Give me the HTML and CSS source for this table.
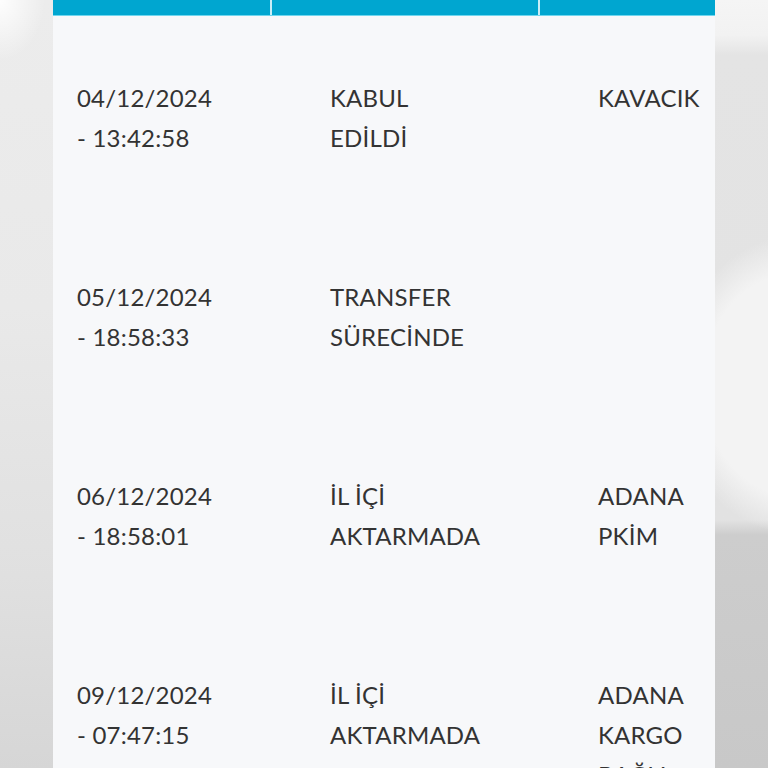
FILE: index.html
```html
<!DOCTYPE html>
<html lang="tr">
<head>
<meta charset="utf-8">
<title>Kargo Takip</title>
<link rel="stylesheet" href="styles.css">
</head>
<body>
<div class="backdrop">
  <div class="panel">
    <div class="thead">
      <div class="th"></div>
      <div class="th"></div>
      <div class="th"></div>
    </div>
    <div class="tbody">
      <div class="row">
        <div class="cell date">04/12/2024 - 13:42:58</div>
        <div class="cell status">KABUL EDİLDİ</div>
        <div class="cell place">KAVACIK</div>
      </div>
      <div class="row">
        <div class="cell date">05/12/2024 - 18:58:33</div>
        <div class="cell status">TRANSFER SÜRECİNDE</div>
        <div class="cell place"></div>
      </div>
      <div class="row">
        <div class="cell date">06/12/2024 - 18:58:01</div>
        <div class="cell status">İL İÇİ AKTARMADA</div>
        <div class="cell place">ADANA PKİM</div>
      </div>
      <div class="row">
        <div class="cell date">09/12/2024 - 07:47:15</div>
        <div class="cell status">İL İÇİ AKTARMADA</div>
        <div class="cell place">ADANA KARGO BAĞLI</div>
      </div>
    </div>
  </div>
</div>
</body>
</html>
```
FILE: styles.css
```css
* { box-sizing: border-box; }
html, body { margin: 0; padding: 0; }
body {
  width: 768px;
  height: 768px;
  overflow: hidden;
  font-family: Lato, "Open Sans", sans-serif;
  background: #e6e6e6;
}
.backdrop {
  height: 768px;
  overflow: hidden;
  background:
    radial-gradient(ellipse 60px 70px at 0px 10px, rgba(255,255,255,0.9), rgba(255,255,255,0) 100%),
    radial-gradient(ellipse 130px 150px at 800px 385px, rgba(243,243,243,1) 75%, rgba(243,243,243,0) 100%),
    linear-gradient(180deg, #f5f5f5 0px, #f2f2f2 35px, #e4e4e4 55px, #e2e2e2 520px, #cdcdcd 535px, #c8c8c8 768px);
  padding-left: 53px;
  position: relative;
}
.backdrop::before {
  content: "";
  position: absolute;
  left: 0; top: 0; width: 53px; height: 768px;
  background:
    radial-gradient(ellipse 45px 60px at 0px 0px, rgba(255,255,255,0.95), rgba(255,255,255,0) 100%),
    linear-gradient(180deg, #ececec 0%, #e9e9e9 40%, #e0e0e0 75%, #d6d6d6 100%);
}
.panel {
  position: relative;
  width: 662px;
  height: 768px;
  overflow: hidden;
  background: #f7f8fa;
  color: #333333;
}
.thead {
  display: grid;
  grid-template-columns: 217px 266px 175px;
  column-gap: 2px;
  height: 16px;
  background: #c9eef7;
  border-bottom: 1px solid #6fd6ee;
}
.th { background: #00a6d0; }
.row {
  display: grid;
  grid-template-columns: 253px 268px 117px;
  padding: 62px 0 57px 24px;
  font-size: 24px;
  font-weight: 400;
  letter-spacing: 0.2px;
  line-height: 40px;
  height: 199px;
}
.date { width: 140px; }
.status { width: 158px; }
.place { width: 117px; }
```
